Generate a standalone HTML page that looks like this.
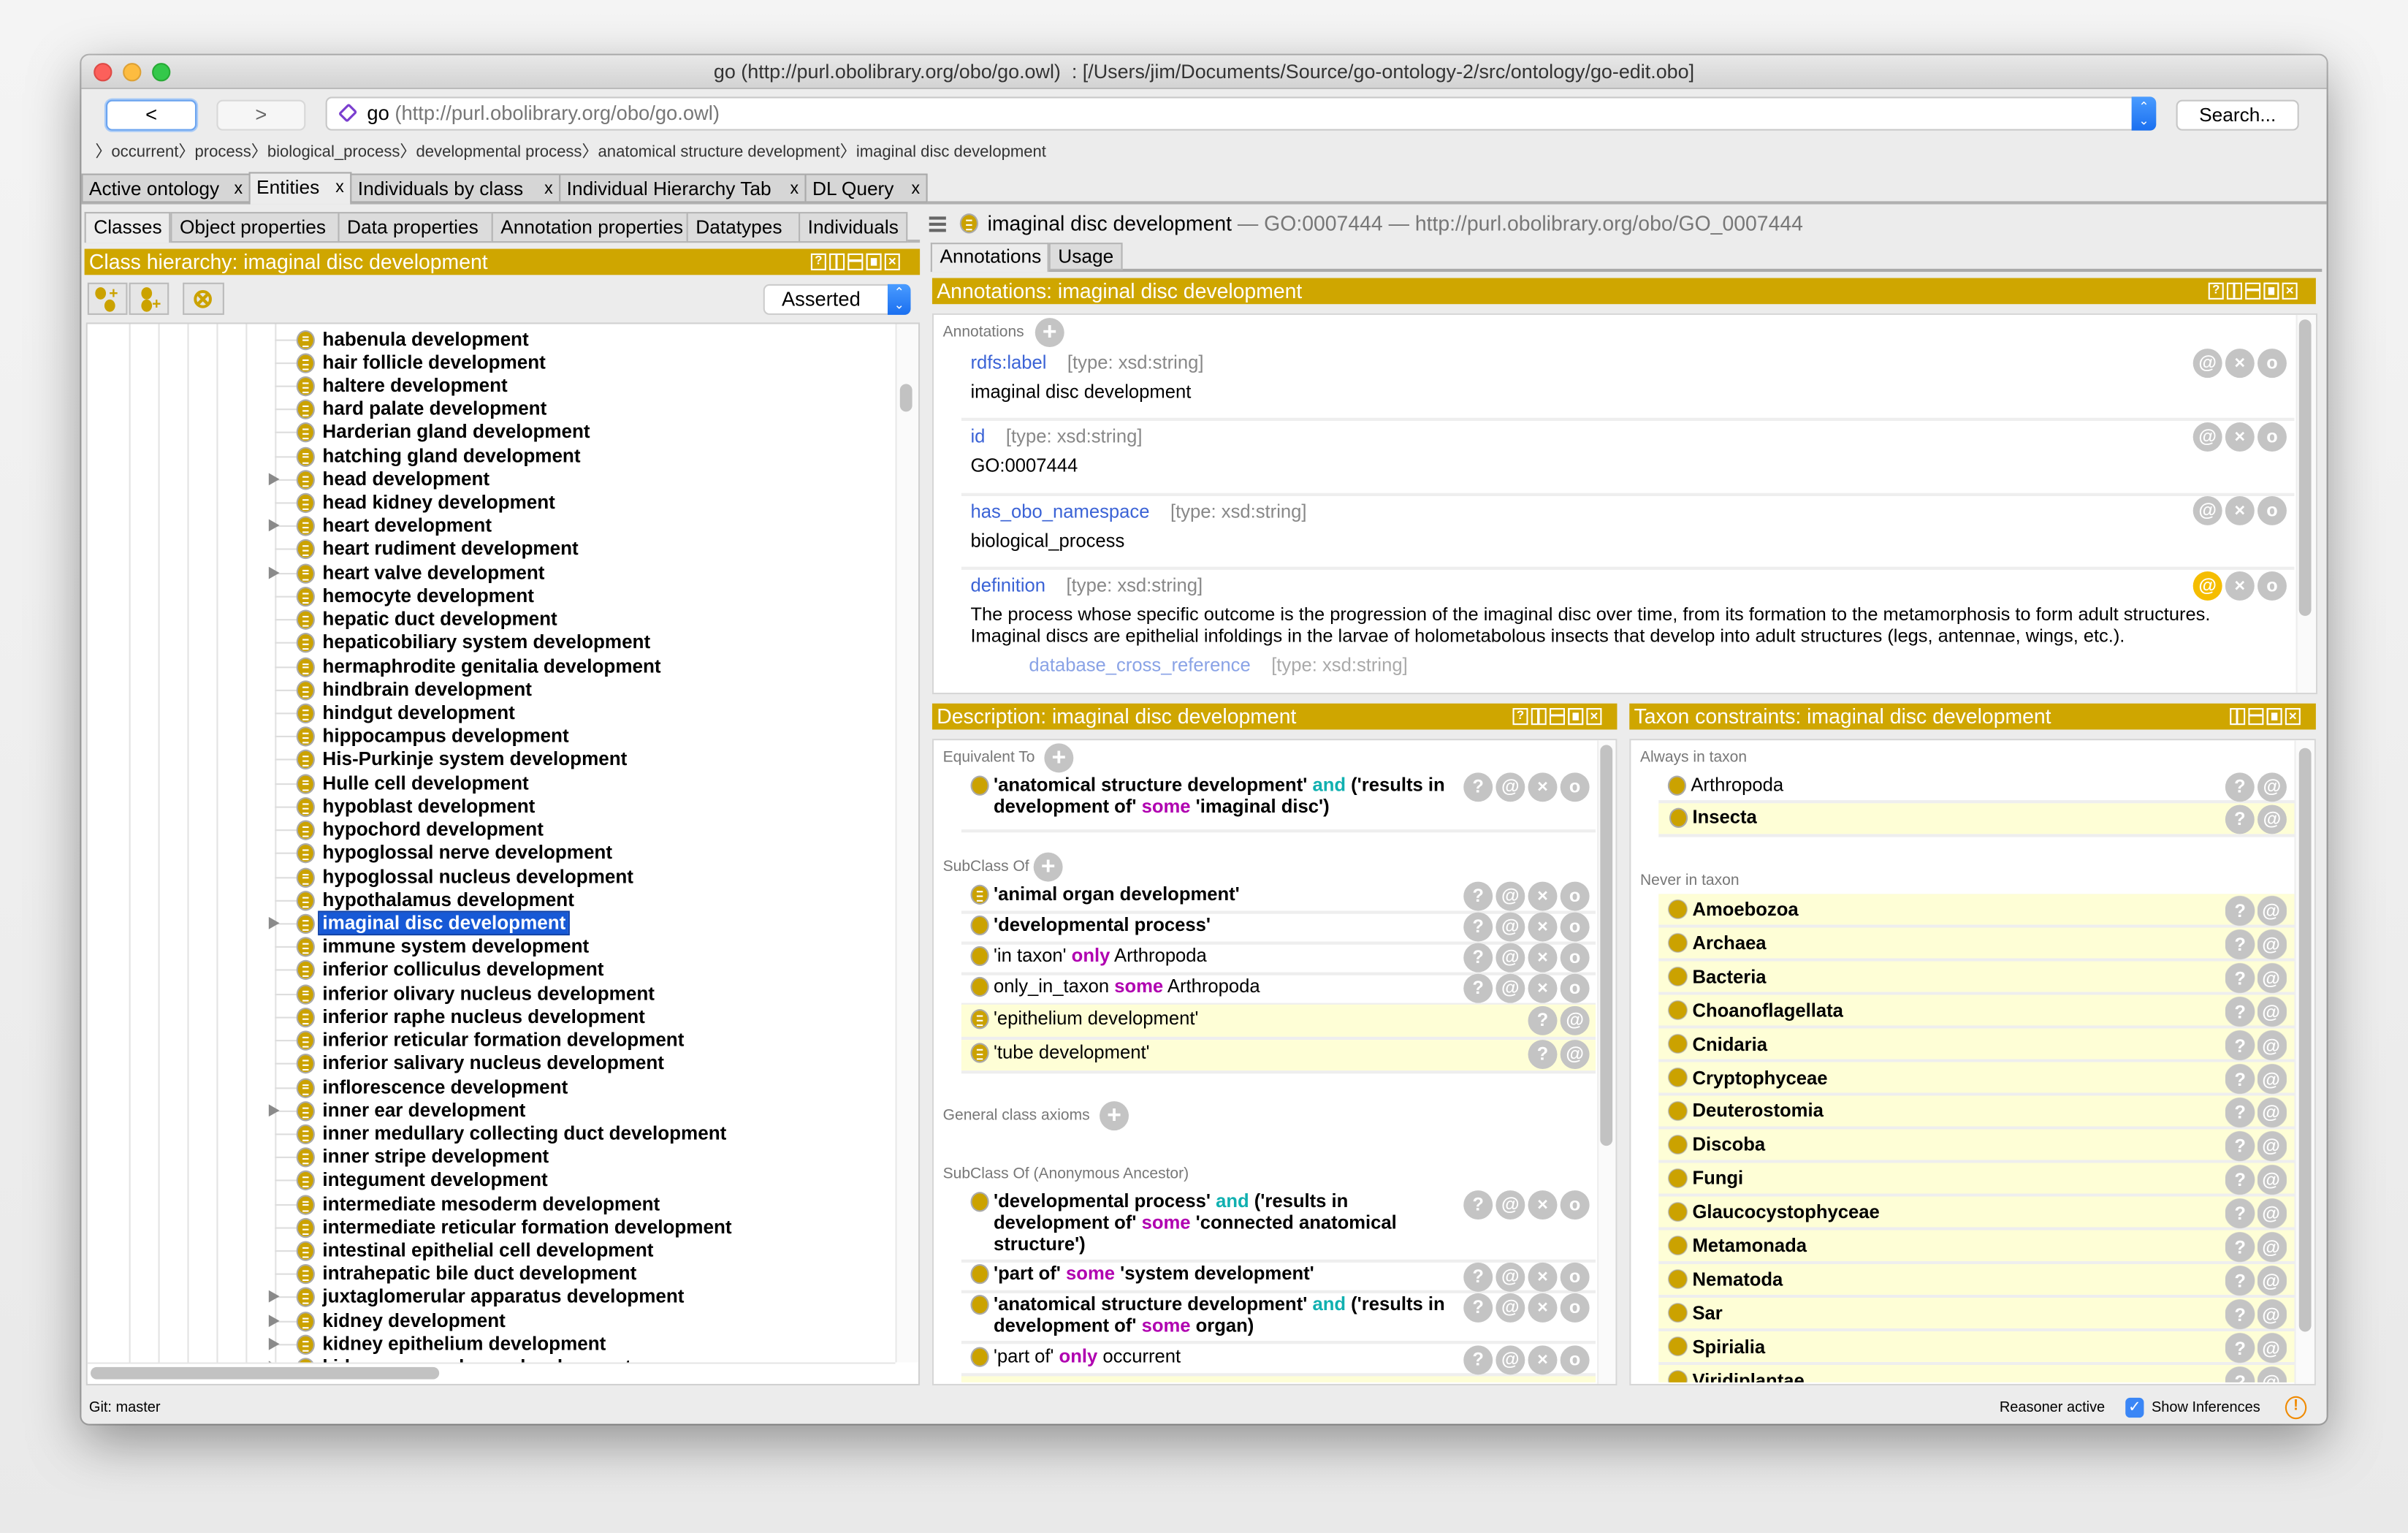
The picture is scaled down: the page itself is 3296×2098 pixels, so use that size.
<!DOCTYPE html>
<html><head><meta charset="utf-8">
<style>
*{box-sizing:border-box;margin:0;padding:0}
html,body{width:3296px;height:2098px;overflow:hidden;background:#f2f2f2}
#R{position:absolute;left:0;top:0;width:1568px;height:998px;transform:scale(2.10204);transform-origin:0 0;font-family:"Liberation Sans",sans-serif;color:#000;background:linear-gradient(#f4f4f4,#e9e9e9)}
.a{position:absolute;white-space:nowrap}
.win{left:53px;top:36px;width:1462px;height:891px;background:#ececec;border-radius:5px;box-shadow:0 12px 35px rgba(0,0,0,.38),0 0 0 1px #b8b8b8}
.hdr{background:#cfa600;color:#fff;font-size:13.5px;line-height:17px;padding-left:3px;height:17px}
.wb{position:absolute;top:3px;width:10px;height:11px;border:1.5px solid #fff}
.c{position:absolute;width:12px;height:13px;border-radius:50%;background:#cba200;border:1px solid #aaa}
.c.l::after{content:"";position:absolute;left:3px;top:3px;width:4px;height:5px;border-top:1.3px solid #fff;border-bottom:1.3px solid #fff;background:linear-gradient(#fff,#fff) 0 1.8px/4px 1.3px no-repeat}
.b{position:absolute;width:19px;height:19px;border-radius:50%;background:#c4c4c4;color:#fff;font-weight:bold;font-size:12px;text-align:center;line-height:19px}
.tree{left:57px;top:211px;width:526px;height:676px;background:#fff;overflow:hidden}
.rows{position:absolute;left:0;top:2.5px;width:526px}
.r{position:relative;height:15.23px;line-height:15.23px;font-size:12.4px;font-weight:bold;padding-left:153px}
.r .c{left:136px;top:1px}
.r::before{content:"";position:absolute;left:122px;top:7px;width:14px;border-top:1px solid #ddd}
.r.t i.tr{position:absolute;left:118px;top:3px;border-left:7px solid #8a8a8a;border-top:4.5px solid transparent;border-bottom:4.5px solid transparent}
.vl{position:absolute;top:0;height:676px;border-left:1px solid #e3e3e3}
.lbl{font-size:10px;color:#777}
.lnk{color:#3b63d6}
.ty{color:#888}
.tx{font-size:12.2px}
.bo{font-weight:bold}
.k1{color:#10b0b0}
.k2{color:#b000b0}
.sep{position:absolute;height:2px;background:#eee}
.yr{position:absolute;background:#fefed6}
.tab{position:absolute;height:19px;border:1px solid #aaa;background:#d6d6d6;font-size:12.5px;line-height:18px;padding-left:4px}
.tab i{font-style:normal;font-size:11px;position:absolute;right:4px}
.et{position:absolute;top:138px;height:20px;border:1px solid #b5b5b5;background:#dcdcdc;font-size:12.5px;line-height:19px;padding-left:5px}
</style></head><body><div id="R">
<div class="a win"></div>
<div class="a" style="left:53px;top:36px;width:1462px;height:22px;border-radius:5px 5px 0 0;background:linear-gradient(#e8e8e8,#d3d3d3);border-bottom:1px solid #b5b5b5"></div>
<div class="a" style="left:61px;top:41px;width:12px;height:12px;border-radius:50%;background:#fc605b;border:1px solid #de4a45"></div>
<div class="a" style="left:80px;top:41px;width:12px;height:12px;border-radius:50%;background:#fdbc40;border:1px solid #dea134"></div>
<div class="a" style="left:99px;top:41px;width:12px;height:12px;border-radius:50%;background:#34c84a;border:1px solid #27aa35"></div>
<div class="a" style="left:53px;width:1462px;top:39px;text-align:center;font-size:12.8px;color:#333">go (http://purl.obolibrary.org/obo/go.owl)&nbsp; : [/Users/jim/Documents/Source/go-ontology-2/src/ontology/go-edit.obo]</div>
<div class="a" style="left:69px;top:65px;width:59px;height:20px;background:#fff;border:1px solid #6aa3ef;border-radius:4px;box-shadow:0 0 0 1px #a9cbf7;text-align:center;font-size:13px;line-height:18px">&lt;</div>
<div class="a" style="left:141px;top:65px;width:58px;height:20px;background:#f6f6f6;border:1px solid #d8d8d8;border-radius:4px;text-align:center;font-size:13px;line-height:18px;color:#666">&gt;</div>
<div class="a" style="left:212px;top:63px;width:1192px;height:22px;background:#fff;border:1px solid #c8c8c8;border-radius:4px;font-size:13px;line-height:20px;padding-left:26px">go <span style="color:#777">(http://purl.obolibrary.org/obo/go.owl)</span></div>
<div class="a" style="left:221px;top:67px;width:11px;height:13px;border:2px solid #7b3fcf;transform:rotate(45deg) scale(.75);border-radius:2px;background:#fff"></div>
<div class="a" style="left:1388px;top:63px;width:16px;height:22px;background:linear-gradient(#4a9cff,#1a6ff0);border-radius:0 4px 4px 0;color:#fff;font-size:8px;line-height:9px;text-align:center;padding-top:2px">&#8963;<br>&#8964;</div>
<div class="a" style="left:1417px;top:65px;width:80px;height:20px;background:#fff;border:1px solid #c6c6c6;border-radius:4px;text-align:center;font-size:12.5px;line-height:18px">Search...</div>
<div class="a" style="left:62px;top:91px;font-size:10.5px;color:#333">〉occurrent〉process〉biological_process〉developmental process〉anatomical structure development〉imaginal disc development</div>
<div class="a" style="left:53px;top:131px;width:1462px;height:2px;background:#b0b0b0"></div>
<div class="tab" style="left:53px;top:113px;width:110px">Active ontology<i>x</i></div>
<div class="tab" style="left:162px;top:112px;width:67px;height:21px;background:#ececec;border-bottom:none">Entities<i>x</i></div>
<div class="tab" style="left:228px;top:113px;width:137px">Individuals by class<i>x</i></div>
<div class="tab" style="left:364px;top:113px;width:161px">Individual Hierarchy Tab<i>x</i></div>
<div class="tab" style="left:524px;top:113px;width:80px">DL Query<i>x</i></div>
<div class="a" style="left:55px;top:156px;width:544px;height:2px;background:#b5b5b5"></div>
<div class="et" style="left:55px;width:56px;background:#ececec;border-bottom:none">Classes</div>
<div class="et" style="left:111px;width:110px">Object properties</div>
<div class="et" style="left:220px;width:101px">Data properties</div>
<div class="et" style="left:320px;width:128px">Annotation properties</div>
<div class="et" style="left:447px;width:74px">Datatypes</div>
<div class="et" style="left:520px;width:71px">Individuals</div>
<div class="a hdr" style="left:55px;top:162px;width:544px">Class hierarchy: imaginal disc development
<div class="wb" style="left:473px;font-size:8px;line-height:8px;text-align:center;font-weight:bold">?</div><div class="wb" style="left:485px;background:linear-gradient(90deg,transparent 3px,#fff 3px,#fff 4.5px,transparent 4.5px)"></div><div class="wb" style="left:497px;background:linear-gradient(transparent 3px,#fff 3px,#fff 4.5px,transparent 4.5px)"></div><div class="wb" style="left:509px;background:#fff;box-shadow:inset 0 0 0 2px #cfa600"></div><div class="wb" style="left:521px;font-size:9px;line-height:8px;text-align:center;font-weight:bold">×</div></div>
<div class="a" style="left:57px;top:184px;width:26px;height:21px;border:1px solid #bbb;background:#e6e6e6"></div>
<div class="a" style="left:84px;top:184px;width:26px;height:21px;border:1px solid #bbb;background:#e6e6e6"></div>
<div class="a" style="left:119px;top:184px;width:27px;height:21px;border:1px solid #bbb;background:#e6e6e6"></div>
<div class="a" style="left:62px;top:187px;width:7px;height:8px;border-radius:50%;background:#cba200"></div><div class="a" style="left:68px;top:195px;width:7px;height:8px;border-radius:50%;background:#cba200"></div><div class="a" style="left:71px;top:186px;color:#cba200;font-size:10px;font-weight:bold">+</div>
<div class="a" style="left:92px;top:187px;width:7px;height:8px;border-radius:50%;background:#cba200"></div><div class="a" style="left:92px;top:195px;width:7px;height:8px;border-radius:50%;background:#cba200"></div><div class="a" style="left:99px;top:193px;color:#cba200;font-size:10px;font-weight:bold">+</div>
<div class="a" style="left:125px;top:186px;color:#cba200;font-size:17px;line-height:17px;font-weight:bold">⊗</div>
<div class="a" style="left:497px;top:185px;width:96px;height:20px;background:#fff;border:1px solid #ccc;border-radius:4px;font-size:13px;line-height:18px;padding-left:11px">Asserted</div>
<div class="a" style="left:578px;top:185px;width:15px;height:20px;background:linear-gradient(#4a9cff,#1a6ff0);border-radius:0 4px 4px 0;color:#fff;font-size:8px;line-height:8px;text-align:center;padding-top:2px">&#8963;<br>&#8964;</div>
<div class="a" style="left:56px;top:210px;width:543px;height:692px;background:#fff;border:1px solid #d0d0d0"></div>
<div class="a tree">
<div class="vl" style="left:27px"></div><div class="vl" style="left:46px"></div><div class="vl" style="left:65px"></div><div class="vl" style="left:84px"></div><div class="vl" style="left:103px"></div><div class="vl" style="left:122px"></div>
<div class="rows">
<div class="r"><i class="c l"></i>habenula development</div>
<div class="r"><i class="c l"></i>hair follicle development</div>
<div class="r"><i class="c l"></i>haltere development</div>
<div class="r"><i class="c l"></i>hard palate development</div>
<div class="r"><i class="c l"></i>Harderian gland development</div>
<div class="r"><i class="c l"></i>hatching gland development</div>
<div class="r t"><i class="tr"></i><i class="c l"></i>head development</div>
<div class="r"><i class="c l"></i>head kidney development</div>
<div class="r t"><i class="tr"></i><i class="c l"></i>heart development</div>
<div class="r"><i class="c l"></i>heart rudiment development</div>
<div class="r t"><i class="tr"></i><i class="c l"></i>heart valve development</div>
<div class="r"><i class="c l"></i>hemocyte development</div>
<div class="r"><i class="c l"></i>hepatic duct development</div>
<div class="r"><i class="c l"></i>hepaticobiliary system development</div>
<div class="r"><i class="c l"></i>hermaphrodite genitalia development</div>
<div class="r"><i class="c l"></i>hindbrain development</div>
<div class="r"><i class="c l"></i>hindgut development</div>
<div class="r"><i class="c l"></i>hippocampus development</div>
<div class="r"><i class="c l"></i>His-Purkinje system development</div>
<div class="r"><i class="c l"></i>Hulle cell development</div>
<div class="r"><i class="c l"></i>hypoblast development</div>
<div class="r"><i class="c l"></i>hypochord development</div>
<div class="r"><i class="c l"></i>hypoglossal nerve development</div>
<div class="r"><i class="c l"></i>hypoglossal nucleus development</div>
<div class="r"><i class="c l"></i>hypothalamus development</div>
<div class="r t"><i class="tr"></i><i class="c l"></i><span style="background:#1759d6;color:#fff;padding:0 2px;margin-left:-2px;outline:1px solid #0b3fa8">imaginal disc development</span></div>
<div class="r"><i class="c l"></i>immune system development</div>
<div class="r"><i class="c l"></i>inferior colliculus development</div>
<div class="r"><i class="c l"></i>inferior olivary nucleus development</div>
<div class="r"><i class="c l"></i>inferior raphe nucleus development</div>
<div class="r"><i class="c l"></i>inferior reticular formation development</div>
<div class="r"><i class="c l"></i>inferior salivary nucleus development</div>
<div class="r"><i class="c l"></i>inflorescence development</div>
<div class="r t"><i class="tr"></i><i class="c l"></i>inner ear development</div>
<div class="r"><i class="c l"></i>inner medullary collecting duct development</div>
<div class="r"><i class="c l"></i>inner stripe development</div>
<div class="r"><i class="c l"></i>integument development</div>
<div class="r"><i class="c l"></i>intermediate mesoderm development</div>
<div class="r"><i class="c l"></i>intermediate reticular formation development</div>
<div class="r"><i class="c l"></i>intestinal epithelial cell development</div>
<div class="r"><i class="c l"></i>intrahepatic bile duct development</div>
<div class="r t"><i class="tr"></i><i class="c l"></i>juxtaglomerular apparatus development</div>
<div class="r t"><i class="tr"></i><i class="c l"></i>kidney development</div>
<div class="r t"><i class="tr"></i><i class="c l"></i>kidney epithelium development</div>
<div class="r t"><i class="tr"></i><i class="c l"></i>kidney mesenchyme development</div>
</div></div>
<div class="a" style="left:57px;top:887px;width:526px;height:13px;background:#fff;border-top:1px solid #e6e6e6"></div>
<div class="a" style="left:59px;top:890px;width:227px;height:8px;border-radius:4px;background:#c2c2c2"></div>
<div class="a" style="left:583px;top:211px;width:15px;height:676px;background:#fafafa;border-left:1px solid #e8e8e8"></div>
<div class="a" style="left:586px;top:250px;width:8px;height:18px;border-radius:4px;background:#c2c2c2"></div>

<div class="a" style="left:605px;top:141px;width:11px;height:2px;background:#666;box-shadow:0 4px 0 #666,0 8px 0 #666"></div>
<i class="c l" style="left:625px;top:139px"></i>
<div class="a" style="left:643px;top:138px;font-size:13.5px">imaginal disc development <span style="color:#777">— GO:0007444 — http://purl.obolibrary.org/obo/GO_0007444</span></div>
<div class="a" style="left:606px;top:175px;width:906px;height:2px;background:#aaa"></div>
<div class="et" style="left:606px;top:158px;width:77px;height:19px;background:#ececec;border-bottom:none;line-height:17px">Annotations</div>
<div class="et" style="left:683px;top:158px;width:48px;height:18px;line-height:17px">Usage</div>
<div class="a hdr" style="left:607px;top:181px;width:901px">Annotations: imaginal disc development
<div class="wb" style="left:831px;font-size:8px;line-height:8px;text-align:center;font-weight:bold">?</div><div class="wb" style="left:843px;background:linear-gradient(90deg,transparent 3px,#fff 3px,#fff 4.5px,transparent 4.5px)"></div><div class="wb" style="left:855px;background:linear-gradient(transparent 3px,#fff 3px,#fff 4.5px,transparent 4.5px)"></div><div class="wb" style="left:867px;background:#fff;box-shadow:inset 0 0 0 2px #cfa600"></div><div class="wb" style="left:879px;font-size:9px;line-height:8px;text-align:center;font-weight:bold">×</div></div>
<div class="a" style="left:607px;top:204px;width:902px;height:248px;background:#fff;border:1px solid #d6d6d6"></div>
<div class="a" style="left:1495px;top:205px;width:13px;height:246px;background:#fafafa;border-left:1px solid #eee"></div>
<div class="a" style="left:1497px;top:208px;width:8px;height:193px;border-radius:4px;background:#c2c2c2"></div>
<div class="a lbl" style="left:614px;top:211px">Annotations</div>
<div class="b" style="left:674px;top:207px;font-size:16px">+</div>
<div class="a tx" style="left:632px;top:229px"><span class="lnk">rdfs:label</span>&nbsp;&nbsp;&nbsp; <span class="ty">[type: xsd:string]</span></div>
<div class="a tx" style="left:632px;top:248px">imaginal disc development</div>
<div class="sep" style="left:626px;top:272px;width:868px"></div>
<div class="a tx" style="left:632px;top:277px"><span class="lnk">id</span>&nbsp;&nbsp;&nbsp; <span class="ty">[type: xsd:string]</span></div>
<div class="a tx" style="left:632px;top:296px">GO:0007444</div>
<div class="sep" style="left:626px;top:321px;width:868px"></div>
<div class="a tx" style="left:632px;top:326px"><span class="lnk">has_obo_namespace</span>&nbsp;&nbsp;&nbsp; <span class="ty">[type: xsd:string]</span></div>
<div class="a tx" style="left:632px;top:345px">biological_process</div>
<div class="sep" style="left:626px;top:369px;width:868px"></div>
<div class="a tx" style="left:632px;top:374px"><span class="lnk">definition</span>&nbsp;&nbsp;&nbsp; <span class="ty">[type: xsd:string]</span></div>
<div class="a tx" style="left:632px;top:393px;font-size:12.1px;line-height:14px">The process whose specific outcome is the progression of the imaginal disc over time, from its formation to the metamorphosis to form adult structures.<br>Imaginal discs are epithelial infoldings in the larvae of holometabolous insects that develop into adult structures (legs, antennae, wings, etc.).</div>
<div class="a tx" style="left:670px;top:426px"><span class="lnk" style="color:#8aa3e6">database_cross_reference</span>&nbsp;&nbsp;&nbsp; <span class="ty" style="color:#aaa">[type: xsd:string]</span></div>
<div class="a" style="left:608px;top:449px;width:887px;height:2px;background:#fff"></div>
<div class="b" style="left:1428px;top:227px">@</div><div class="b" style="left:1449px;top:227px">×</div><div class="b" style="left:1470px;top:227px">o</div>
<div class="b" style="left:1428px;top:275px">@</div><div class="b" style="left:1449px;top:275px">×</div><div class="b" style="left:1470px;top:275px">o</div>
<div class="b" style="left:1428px;top:323px">@</div><div class="b" style="left:1449px;top:323px">×</div><div class="b" style="left:1470px;top:323px">o</div>
<div class="b" style="left:1428px;top:372px;background:#f5bd00">@</div><div class="b" style="left:1449px;top:372px">×</div><div class="b" style="left:1470px;top:372px">o</div>

<div class="a hdr" style="left:607px;top:458px;width:446px">Description: imaginal disc development
<div class="wb" style="left:378px;font-size:8px;line-height:8px;text-align:center;font-weight:bold">?</div><div class="wb" style="left:390px;background:linear-gradient(90deg,transparent 3px,#fff 3px,#fff 4.5px,transparent 4.5px)"></div><div class="wb" style="left:402px;background:linear-gradient(transparent 3px,#fff 3px,#fff 4.5px,transparent 4.5px)"></div><div class="wb" style="left:414px;background:#fff;box-shadow:inset 0 0 0 2px #cfa600"></div><div class="wb" style="left:426px;font-size:9px;line-height:8px;text-align:center;font-weight:bold">×</div></div>
<div class="a" style="left:607px;top:481px;width:446px;height:421px;background:#fff;border:1px solid #d6d6d6"></div>
<div class="a" style="left:1040px;top:482px;width:12px;height:419px;background:#fafafa;border-left:1px solid #eee"></div>
<div class="a" style="left:1042px;top:485px;width:8px;height:261px;border-radius:4px;background:#c2c2c2"></div>
<div class="a lbl" style="left:614px;top:488px">Equivalent To</div><div class="b" style="left:680px;top:484px;font-size:16px">+</div>
<i class="c" style="left:632px;top:505px"></i>
<div class="a tx bo" style="left:647px;top:504px;line-height:14px">'anatomical structure development' <span class="k1">and</span> ('results in<br>development of' <span class="k2">some</span> 'imaginal disc')</div>
<div class="sep" style="left:626px;top:540px;width:413px"></div>
<div class="b" style="left:953px;top:503px">?</div><div class="b" style="left:974px;top:503px">@</div><div class="b" style="left:995px;top:503px">×</div><div class="b" style="left:1016px;top:503px">o</div>

<div class="a lbl" style="left:614px;top:559px">SubClass Of</div><div class="b" style="left:673px;top:555px;font-size:16px">+</div>
<i class="c l" style="left:632px;top:576px"></i><div class="a tx bo" style="left:647px;top:575px">'animal organ development'</div>
<div class="sep" style="left:626px;top:593px;width:413px"></div>
<i class="c" style="left:632px;top:596px"></i><div class="a tx bo" style="left:647px;top:595px">'developmental process'</div>
<div class="sep" style="left:626px;top:613px;width:413px"></div>
<i class="c" style="left:632px;top:616px"></i><div class="a tx" style="left:647px;top:615px">'in taxon' <span class="k2 bo">only</span> Arthropoda</div>
<div class="sep" style="left:626px;top:633px;width:413px"></div>
<i class="c" style="left:632px;top:636px"></i><div class="a tx" style="left:647px;top:635px">only_in_taxon <span class="k2 bo">some</span> Arthropoda</div>
<div class="sep" style="left:626px;top:653px;width:413px"></div>
<div class="b" style="left:953px;top:574px">?</div><div class="b" style="left:974px;top:574px">@</div><div class="b" style="left:995px;top:574px">×</div><div class="b" style="left:1016px;top:574px">o</div>
<div class="b" style="left:953px;top:594px">?</div><div class="b" style="left:974px;top:594px">@</div><div class="b" style="left:995px;top:594px">×</div><div class="b" style="left:1016px;top:594px">o</div>
<div class="b" style="left:953px;top:614px">?</div><div class="b" style="left:974px;top:614px">@</div><div class="b" style="left:995px;top:614px">×</div><div class="b" style="left:1016px;top:614px">o</div>
<div class="b" style="left:953px;top:634px">?</div><div class="b" style="left:974px;top:634px">@</div><div class="b" style="left:995px;top:634px">×</div><div class="b" style="left:1016px;top:634px">o</div>
<div class="yr" style="left:626px;top:654px;width:413px;height:21px"></div>
<div class="sep" style="left:626px;top:675px;width:413px"></div>
<div class="yr" style="left:626px;top:677px;width:413px;height:20px"></div>
<div class="sep" style="left:626px;top:697px;width:413px"></div>
<i class="c l" style="left:632px;top:657px"></i><div class="a tx" style="left:647px;top:656px">'epithelium development'</div>
<i class="c l" style="left:632px;top:679px"></i><div class="a tx" style="left:647px;top:678px">'tube development'</div>
<div class="b" style="left:995px;top:655px">?</div><div class="b" style="left:1016px;top:655px">@</div>
<div class="b" style="left:995px;top:677px">?</div><div class="b" style="left:1016px;top:677px">@</div>

<div class="a lbl" style="left:614px;top:721px">General class axioms</div><div class="b" style="left:716px;top:717px;font-size:16px">+</div>
<div class="a lbl" style="left:614px;top:759px">SubClass Of (Anonymous Ancestor)</div>
<i class="c" style="left:632px;top:776px"></i>
<div class="a tx bo" style="left:647px;top:775px;line-height:14px">'developmental process' <span class="k1">and</span> ('results in<br>development of' <span class="k2">some</span> 'connected anatomical<br>structure')</div>
<div class="sep" style="left:626px;top:820px;width:413px"></div>
<i class="c" style="left:632px;top:823px"></i><div class="a tx bo" style="left:647px;top:822px">'part of' <span class="k2">some</span> 'system development'</div>
<div class="sep" style="left:626px;top:840px;width:413px"></div>
<i class="c" style="left:632px;top:843px"></i>
<div class="a tx bo" style="left:647px;top:842px;line-height:14px">'anatomical structure development' <span class="k1">and</span> ('results in<br>development of' <span class="k2">some</span> organ)</div>
<div class="sep" style="left:626px;top:873px;width:413px"></div>
<i class="c" style="left:632px;top:877px"></i><div class="a tx" style="left:647px;top:876px">'part of' <span class="k2 bo">only</span> occurrent</div>
<div class="sep" style="left:626px;top:894px;width:413px"></div>
<div class="yr" style="left:626px;top:896px;width:413px;height:4px"></div>
<div class="b" style="left:953px;top:775px">?</div><div class="b" style="left:974px;top:775px">@</div><div class="b" style="left:995px;top:775px">×</div><div class="b" style="left:1016px;top:775px">o</div>
<div class="b" style="left:953px;top:822px">?</div><div class="b" style="left:974px;top:822px">@</div><div class="b" style="left:995px;top:822px">×</div><div class="b" style="left:1016px;top:822px">o</div>
<div class="b" style="left:953px;top:842px">?</div><div class="b" style="left:974px;top:842px">@</div><div class="b" style="left:995px;top:842px">×</div><div class="b" style="left:1016px;top:842px">o</div>
<div class="b" style="left:953px;top:876px">?</div><div class="b" style="left:974px;top:876px">@</div><div class="b" style="left:995px;top:876px">×</div><div class="b" style="left:1016px;top:876px">o</div>

<div class="a hdr" style="left:1061px;top:458px;width:447px">Taxon constraints: imaginal disc development
<div class="wb" style="left:391px;background:linear-gradient(90deg,transparent 3px,#fff 3px,#fff 4.5px,transparent 4.5px)"></div><div class="wb" style="left:403px;background:linear-gradient(transparent 3px,#fff 3px,#fff 4.5px,transparent 4.5px)"></div><div class="wb" style="left:415px;background:#fff;box-shadow:inset 0 0 0 2px #cfa600"></div><div class="wb" style="left:427px;font-size:9px;line-height:8px;text-align:center;font-weight:bold">×</div></div>
<div class="a" style="left:1061px;top:481px;width:447px;height:421px;background:#fff;border:1px solid #d6d6d6"></div>
<div class="a" style="left:1494px;top:482px;width:13px;height:419px;background:#fafafa;border-left:1px solid #eee"></div>
<div class="a" style="left:1497px;top:487px;width:8px;height:380px;border-radius:4px;background:#c2c2c2"></div>
<div class="a lbl" style="left:1068px;top:488px">Always in taxon</div>
<i class="c" style="left:1086px;top:505px"></i><div class="a tx" style="left:1101px;top:504px">Arthropoda</div>
<div class="sep" style="left:1080px;top:521px;width:414px"></div>
<div class="yr" style="left:1080px;top:523px;width:414px;height:20px"></div>
<div class="sep" style="left:1080px;top:543px;width:414px"></div>
<i class="c" style="left:1087px;top:526px"></i><div class="a tx bo" style="left:1102px;top:525px">Insecta</div>
<div class="b" style="left:1449px;top:503px">?</div><div class="b" style="left:1470px;top:503px">@</div>
<div class="b" style="left:1449px;top:524px">?</div><div class="b" style="left:1470px;top:524px">@</div>
<div class="a lbl" style="left:1068px;top:568px">Never in taxon</div>
<div class="a" style="left:1080px;top:582px;width:414px;height:318px;overflow:hidden;background:repeating-linear-gradient(#fefed6 0,#fefed6 20px,#eee 20px,#eee 21.9px)">
<div style="font-size:12.2px;font-weight:bold;line-height:21.9px;padding-left:22px">Amoebozoa<br>Archaea<br>Bacteria<br>Choanoflagellata<br>Cnidaria<br>Cryptophyceae<br>Deuterostomia<br>Discoba<br>Fungi<br>Glaucocystophyceae<br>Metamonada<br>Nematoda<br>Sar<br>Spirialia<br>Viridiplantae</div>
<div style="position:absolute;left:6px;top:0;width:13px;height:330px;background:radial-gradient(circle at 6.5px 10px,#cba200 5.5px,#aaa 6px,transparent 6.6px) 0 0/13px 21.9px repeat-y"></div>
<div style="position:absolute;left:369px;top:0;width:40px;height:330px;background:radial-gradient(circle at 9.5px 11px,#c4c4c4 9.5px,transparent 10px) 0 0/21px 21.9px repeat"></div>
<div style="position:absolute;left:369px;top:0;width:40px;font-size:12px;font-weight:bold;color:#fff;line-height:21.9px;padding-top:1px"><div style="position:absolute;left:6px">?<br>?<br>?<br>?<br>?<br>?<br>?<br>?<br>?<br>?<br>?<br>?<br>?<br>?<br>?</div><div style="position:absolute;left:24px">@<br>@<br>@<br>@<br>@<br>@<br>@<br>@<br>@<br>@<br>@<br>@<br>@<br>@<br>@</div></div>
</div>

<div class="a" style="left:58px;top:911px;font-size:9.5px">Git: master</div>
<div class="a" style="left:1302px;top:911px;font-size:9.5px">Reasoner active</div>
<div class="a" style="left:1384px;top:910px;width:12px;height:13px;border-radius:3px;background:#3a86f6;color:#fff;font-size:10px;line-height:13px;text-align:center">✓</div>
<div class="a" style="left:1401px;top:911px;font-size:9.5px">Show Inferences</div>
<div class="a" style="left:1488px;top:909px;width:14px;height:15px;border:1.5px solid #f08a00;border-radius:50%;color:#f08a00;font-size:10px;line-height:12px;text-align:center;font-weight:bold">!</div>
</div></body></html>
